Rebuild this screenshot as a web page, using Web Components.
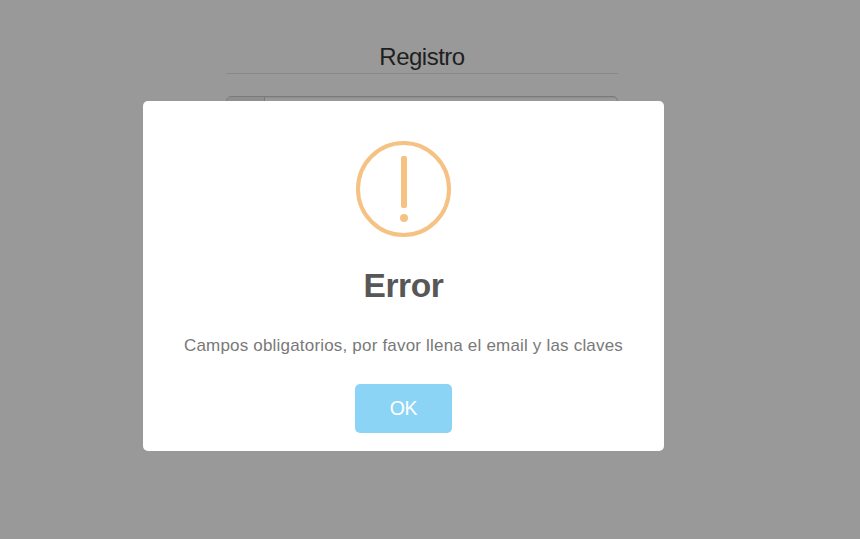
<!DOCTYPE html>
<html lang="es">
<head>
<meta charset="utf-8">
<title>Registro</title>
<style>
html,body{margin:0;height:100%;overflow:hidden;background:#999;font-family:"Liberation Sans",Arial,sans-serif}
</style>
</head>
<body>
<app-page>
  <register-form heading="Registro"></register-form>
  <alert-dialog slot="dialog">
    <warning-icon slot="icon"></warning-icon>
    <span slot="title">Error</span>
    <span slot="message">Campos obligatorios, por favor llena el email y las claves</span>
    <alert-button slot="action">OK</alert-button>
  </alert-dialog>
</app-page>
<script>
const define = (name, html) => customElements.define(name, class extends HTMLElement {
  constructor() {
    super();
    this.attachShadow({ mode: 'open' }).innerHTML = html;
  }
  connectedCallback() {
    const h = this.shadowRoot.querySelector('[data-heading]');
    if (h) h.textContent = this.getAttribute('heading');
  }
});

define('alert-button', `<style>
:host{display:block}
button{display:block;width:97px;height:49px;padding:0;border:0;border-radius:5px;background:#8cd4f5;color:#fff;font:19.5px/49px "Liberation Sans",Arial,sans-serif;letter-spacing:-.3px}
</style><button><slot></slot></button>`);

define('warning-icon', `<style>
:host{display:block;width:96px;height:96px}
svg{display:block}
</style><svg width="96" height="96" viewBox="0 0 96 96" fill="#f6c283">
<ellipse cx="47.5" cy="48" rx="45.5" ry="46" fill="none" stroke="#f6c283" stroke-width="4"/>
<rect x="45" y="15" width="6" height="52" rx="2"/><circle cx="48" cy="77" r="4"/></svg>`);

define('alert-dialog', `<style>
:host{display:flex;flex-direction:column;align-items:center;box-sizing:border-box;width:521px;height:350px;padding-top:40px;border-radius:5px;background:#fff}
h2{margin:29px 0 0;height:40px;font-size:33.5px;line-height:40px;font-weight:700;letter-spacing:-.4px;color:#575757}
p{margin:27px 0 0;height:26px;font-size:17px;line-height:26px;letter-spacing:.19px;color:#797979;white-space:nowrap}
.action{margin-top:25px}
</style><slot name="icon"></slot><h2><slot name="title"></slot></h2><p><slot name="message"></slot></p><div class="action"><slot name="action"></slot></div>`);

define('register-form', `<style>
:host{display:block;width:392px;margin-left:226px;padding-top:42px}
h1{margin:0;height:31px;border-bottom:1px solid #898989;font-size:24px;line-height:30px;font-weight:400;letter-spacing:-.5px;text-align:center;color:#1f1f1f}
.field{display:flex;box-sizing:border-box;height:37px;margin-top:22px;border:1px solid #7a7a7a;border-radius:5px;overflow:hidden;background:#999}
.addon{width:37px;border-right:1px solid #7a7a7a;background:#8f8f8f}
.input{flex:1;box-shadow:inset 0 1px 1px rgba(0,0,0,.08)}
</style><h1 data-heading></h1><div class="field"><div class="addon"></div><div class="input"></div></div>`);

define('app-page', `<style>
:host{display:block;position:relative;height:539px;background:#999}
.overlay{position:absolute;left:143px;top:101px}
</style><slot></slot><div class="overlay"><slot name="dialog"></slot></div>`);
</script>
</body>
</html>
